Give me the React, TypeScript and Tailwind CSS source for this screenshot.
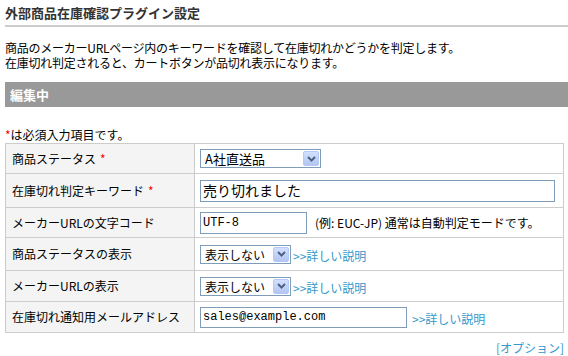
import React from 'react';

// 外部商品在庫確認プラグイン設定画面

const jp = "font-['Noto_Sans_CJK_JP',sans-serif]";
const mono = "font-['Liberation_Mono','DejaVu_Sans_Mono',monospace]";

function Chevron() {
  return (
    <svg width="9" height="6" viewBox="0 0 9 6" className="block">
      <path d="M1 1 L4.5 4.5 L8 1" fill="none" stroke="#4d6185" strokeWidth="2" />
    </svg>
  );
}

function FakeSelect({ value, className, textClass }: { value: string; className: string; textClass: string }) {
  return (
    <div className={`flex h-[19px] items-center border border-[#7f9db9] bg-white ${className}`}>
      <span className={`flex-1 pl-[4px] leading-[17px] text-black ${textClass}`}>{value}</span>
      <span className="mr-[1px] flex h-[15px] w-[16px] items-center justify-center rounded-[2px] border border-[#b6c9f4] bg-gradient-to-b from-[#d3e0fd] to-[#b2c6f3]">
        <Chevron />
      </span>
    </div>
  );
}

function MoreLink() {
  return <a className="text-[12px] leading-none text-[#3399cc]">&gt;&gt;詳しい説明</a>;
}

function Row({ label, required, h, children, last }: { label: string; required?: boolean; h: string; children: React.ReactNode; last?: boolean }) {
  return (
    <div className={`flex ${h} ${last ? '' : 'border-b border-[#cccccc]'}`}>
      <div className="flex w-[189px] shrink-0 items-center border-r border-[#cccccc] bg-[#f3f4f3] pl-[6px] text-[12px] text-black">
        {label}
        {required && <span className="ml-[4px] text-[#ff0000]">*</span>}
      </div>
      <div className="flex flex-1 items-center pl-[5px]">{children}</div>
    </div>
  );
}

export default function App() {
  return (
    <div className={`min-h-[356px] w-[568px] bg-white pl-[5px] ${jp}`}>
      {/* タイトル */}
      <h1 className="h-[27px] border-b-2 border-[#cccccc] text-[13px] font-bold leading-[25px] text-[#333333]">
        外部商品在庫確認プラグイン設定
      </h1>

      {/* 説明 */}
      <p className="mt-[13px] text-[12px] leading-[15px] tracking-[-0.25px] text-black">
        商品のメーカーURLページ内のキーワードを確認して在庫切れかどうかを判定します。
        <br />
        在庫切れ判定されると、カートボタンが品切れ表示になります。
      </p>

      {/* 見出しバー */}
      <div className="mt-[12px] flex h-[25px] items-center bg-[#999999] pl-[5px] text-[13px] font-bold text-white">
        編集中
      </div>

      <p className="mt-[20px] text-[12px] leading-[15px] text-black">
        <span className="text-[#ff0000]">*</span>は必須入力項目です。
      </p>

      {/* 設定テーブル */}
      <div className="mt-[1px] w-[559px] border border-[#cccccc]">
        <Row label="商品ステータス" required h="h-[30px]">
          <FakeSelect value="A社直送品" className="w-[121px]" textClass="text-[13px]" />
        </Row>
        <Row label="在庫切れ判定キーワード" required h="h-[34px]">
          <div className="flex h-[22px] w-[355px] items-center border border-[#7f9db9] bg-white pl-[2px] text-[14px] text-black">
            売り切れました
          </div>
        </Row>
        <Row label="メーカーURLの文字コード" h="h-[30px]">
          <div className={`flex h-[22px] w-[107px] items-center border border-[#7f9db9] bg-white pl-[2px] text-[12px] text-black ${mono}`}>
            UTF-8
          </div>
          <span className="ml-[8px] text-[12px] text-black">(例: EUC-JP) 通常は自動判定モードです。</span>
        </Row>
        <Row label="商品ステータスの表示" h="h-[33px]">
          <FakeSelect value="表示しない" className="w-[91px]" textClass="text-[12px]" />
          <span className="ml-[2px]">
            <MoreLink />
          </span>
        </Row>
        <Row label="メーカーURLの表示" h="h-[31px]">
          <FakeSelect value="表示しない" className="w-[91px]" textClass="text-[12px]" />
          <span className="ml-[2px]">
            <MoreLink />
          </span>
        </Row>
        <Row label="在庫切れ通知用メールアドレス" h="h-[30px]" last>
          <div className={`flex h-[21px] w-[207px] items-center border border-[#7f9db9] bg-white pl-[2px] text-[12px] text-black ${mono}`}>
            sales@example.com
          </div>
          <span className="ml-[5px]">
            <MoreLink />
          </span>
        </Row>
      </div>

      <div className="mt-[8px] w-[559px] text-right text-[12px] leading-[14px] text-[#3399cc]">[オプション]</div>
    </div>
  );
}
